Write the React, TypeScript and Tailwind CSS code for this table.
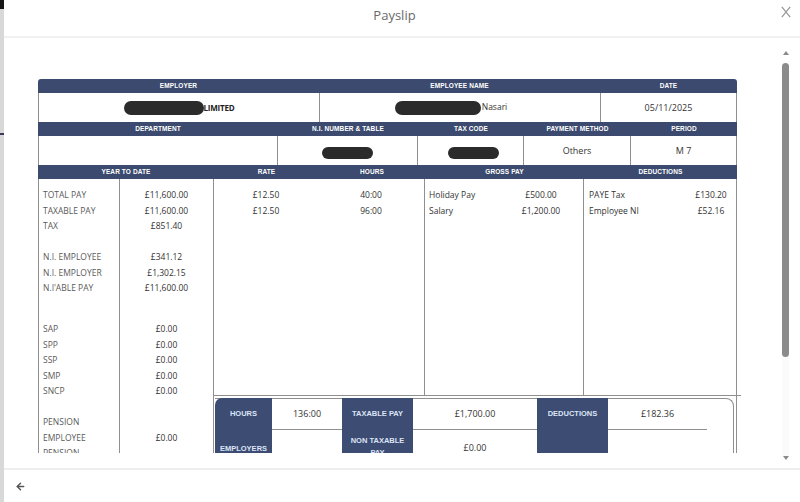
import { ArrowLeft } from "lucide-react";

const H =
  "flex items-center justify-center text-[6.5px] font-bold text-white font-['Liberation_Sans',sans-serif] tracking-[0.1px] whitespace-nowrap";
const B = "border-[#8f8f8f]";

type Row = { label?: string; value?: string; gap?: string };

const ytd: Row[] = [
  { label: "TOTAL PAY", value: "£11,600.00" },
  { label: "TAXABLE PAY", value: "£11,600.00" },
  { label: "TAX", value: "£851.40" },
  { gap: "h-[15.5px]" },
  { label: "N.I. EMPLOYEE", value: "£341.12" },
  { label: "N.I. EMPLOYER", value: "£1,302.15" },
  { label: "N.I'ABLE PAY", value: "£11,600.00" },
  { gap: "h-[25.5px]" },
  { label: "SAP", value: "£0.00" },
  { label: "SPP", value: "£0.00" },
  { label: "SSP", value: "£0.00" },
  { label: "SMP", value: "£0.00" },
  { label: "SNCP", value: "£0.00" },
  { gap: "h-[15.5px]" },
  { label: "PENSION", value: "" },
  { label: "EMPLOYEE", value: "£0.00" },
  { label: "PENSION", value: "" },
  { label: "EMPLOYER", value: "£0.00" },
];

function Pill({ cls }: { cls: string }) {
  return <span className={`inline-block rounded-full bg-[#2b2b2b] ${cls}`} />;
}

function Scrollbar() {
  return (
    <div className="w-[7px] mr-[11px] flex flex-col items-center pt-[13px] pb-[8px]">
      <div className="w-0 h-0 border-x-[3px] border-x-transparent border-b-[4px] border-b-[#8a8a8a]" />
      <div className="mt-[8px] w-[7px] h-[294px] rounded-full bg-[#8b8b8b]" />
      <div className="flex-1 w-[7px] bg-[#fbfbfb]" />
      <div className="w-0 h-0 border-x-[3px] border-x-transparent border-t-[4px] border-t-[#8a8a8a]" />
    </div>
  );
}

function Table() {
  return (
    <div className="w-[699px] text-[#333] text-[8.5px]">
      {/* Row 1 */}
      <div className="h-[14px] flex bg-[#3b4a6e] rounded-t-[3px]">
        <div className={`${H} w-[281px]`}>EMPLOYER</div>
        <div className={`${H} w-[281px]`}>EMPLOYEE NAME</div>
        <div className={`${H} flex-1`}>DATE</div>
      </div>
      <div className={`h-[29px] flex border-x ${B}`}>
        <div className={`w-[281px] border-r ${B} flex items-center justify-center`}>
          <Pill cls="w-[80px] h-[14px]" />
          <span className="text-[8px] font-bold text-[#222] -tracking-[0.2px]">LIMITED</span>
        </div>
        <div className={`w-[281px] border-r ${B} flex items-center justify-center pr-[18px]`}>
          <Pill cls="w-[86px] h-[14px]" />
          <span className="text-[8.5px] text-[#333] ml-[1px]">Nasari</span>
        </div>
        <div className="flex-1 flex items-center justify-center text-[9px]">05/11/2025</div>
      </div>

      {/* Row 2 */}
      <div className="h-[14px] flex bg-[#3b4a6e]">
        <div className={`${H} w-[240px]`}>DEPARTMENT</div>
        <div className={`${H} w-[140px]`}>N.I. NUMBER &amp; TABLE</div>
        <div className={`${H} w-[106px]`}>TAX CODE</div>
        <div className={`${H} w-[107px]`}>PAYMENT METHOD</div>
        <div className={`${H} flex-1`}>PERIOD</div>
      </div>
      <div className={`h-[29px] flex border-x ${B}`}>
        <div className={`w-[239px] border-r ${B}`} />
        <div className={`w-[140px] border-r ${B} flex items-center justify-center pt-[4px]`}>
          <Pill cls="w-[51px] h-[12px]" />
        </div>
        <div className={`w-[106px] border-r ${B} flex items-center justify-center pt-[4px] pl-[5px]`}>
          <Pill cls="w-[51px] h-[12px]" />
        </div>
        <div className={`w-[107px] border-r ${B} flex items-center justify-center text-[9px]`}>Others</div>
        <div className="flex-1 flex items-center justify-center text-[9px]">M 7</div>
      </div>

      {/* Row 3 header */}
      <div className="h-[14px] flex bg-[#3b4a6e]">
        <div className={`${H} w-[176px]`}>YEAR TO DATE</div>
        <div className={`${H} w-[105px]`}>RATE</div>
        <div className={`${H} w-[106px]`}>HOURS</div>
        <div className={`${H} w-[159px]`}>GROSS PAY</div>
        <div className={`${H} flex-1`}>DEDUCTIONS</div>
      </div>

      {/* Body */}
      <div className="flex h-[330px]">
        <div className={`w-[82px] border-x ${B} pt-[8px] pl-[4px] text-[#5a5a5a] leading-[15.5px]`}>
          {ytd.map((r, i) =>
            r.gap ? <div key={i} className={r.gap} /> : <div key={i} className="h-[15.5px] whitespace-nowrap">{r.label}</div>
          )}
        </div>
        <div className={`w-[94px] border-r ${B} pt-[8px] text-center leading-[15.5px]`}>
          {ytd.map((r, i) =>
            r.gap ? <div key={i} className={r.gap} /> : <div key={i} className="h-[15.5px]">{r.value}</div>
          )}
        </div>
        <div className={`w-[523px] border-r ${B} flex flex-col`}>
          <div className="h-[216px] flex">
            <div className="w-[104px] pt-[8px] leading-[15.5px] text-center">
              <div>£12.50</div>
              <div>£12.50</div>
            </div>
            <div className={`w-[107px] border-r ${B} pt-[8px] leading-[15.5px] text-center`}>
              <div>40:00</div>
              <div>96:00</div>
            </div>
            <div className={`w-[159px] border-r ${B} pt-[8px] leading-[15.5px] pl-[4px] pr-[19px]`}>
              <div className="flex"><span className="flex-1">Holiday Pay</span><span className="w-[46px] text-center">£500.00</span></div>
              <div className="flex"><span className="flex-1">Salary</span><span className="w-[46px] text-center">£1,200.00</span></div>
            </div>
            <div className="flex-1 pt-[8px] leading-[15.5px] pl-[5px] pr-[5px]">
              <div className="flex"><span className="flex-1">PAYE Tax</span><span className="w-[40px] text-center">£130.20</span></div>
              <div className="flex"><span className="flex-1">Employee NI</span><span className="w-[40px] text-center">£52.16</span></div>
            </div>
          </div>
          <div className="h-px w-[528px] -ml-px bg-[#8f8f8f]" />
          {/* Summary box */}
          <div className={`mt-[2px] ml-px w-[519px] h-[80px] flex border-t border-r ${B} rounded-tr-[8px]`}>
            <div className="w-[57px] -mt-px bg-[#3d4c72] rounded-tl-[7px] flex flex-col text-[7.5px] font-bold text-[#dce4f6] text-center leading-[12px] font-['Liberation_Sans',sans-serif]">
              <div className="h-[32px] flex items-center justify-center">HOURS</div>
              <div className="pt-[13px]">EMPLOYERS<br />PENSION</div>
            </div>
            <div className="w-[70px] flex flex-col text-[9px]">
              <div className={`h-[31px] border-b ${B} flex items-center justify-center`}>136:00</div>
            </div>
            <div className="w-[71px] -mt-px bg-[#3d4c72] flex flex-col text-[7.5px] font-bold text-[#dce4f6] text-center leading-[12px] font-['Liberation_Sans',sans-serif]">
              <div className="h-[32px] flex items-center justify-center">TAXABLE PAY</div>
              <div className="pt-[5px]">NON TAXABLE<br />PAY</div>
            </div>
            <div className="w-[124px] flex flex-col text-[9px]">
              <div className={`h-[31px] border-b ${B} flex items-center justify-center`}>£1,700.00</div>
              <div className="pt-[12px] text-center leading-[12px]">£0.00</div>
            </div>
            <div className="w-[71px] -mt-px bg-[#3d4c72] flex flex-col text-[7.5px] font-bold text-[#dce4f6] text-center leading-[12px] font-['Liberation_Sans',sans-serif]">
              <div className="h-[32px] flex items-center justify-center">DEDUCTIONS</div>
              <div className="pt-[22px]">NET<br />PAY</div>
            </div>
            <div className="w-[99px] flex flex-col text-[9px]">
              <div className={`h-[31px] border-b ${B} flex items-center justify-center`}>£182.36</div>
            </div>
            <div className="flex-1" />
          </div>
        </div>
      </div>
    </div>
  );
}

export default function App() {
  return (
    <div className="w-[800px] h-[502px] flex overflow-hidden bg-white font-['Open_Sans',sans-serif]">
      <div className="w-[4px] flex flex-col bg-[#d8d8d8]">
        <div className="h-[9px] bg-[#161616]" />
        <div className="h-[124px]" />
        <div className="h-[2px] bg-[#3a3a5a]" />
      </div>
      <div className="flex-1 flex flex-col">
        <div className="h-[36px] flex items-start">
          <div className="flex-1 text-center text-[13px] text-[#6a6a6a] mt-[6px] pl-[4px]">Payslip</div>
          <div className="w-[10px] mt-[6px] mr-[9px]">
            <svg width="10" height="12" viewBox="0 0 10 12">
              <path d="M0.8 0.8 L9.2 11.2 M9.2 0.8 L0.8 11.2" stroke="#9a9a9a" strokeWidth="1.3" fill="none" />
            </svg>
          </div>
        </div>
        <div className="h-[2px] bg-[#f1f1f1]" />
        <div className="flex-1 flex min-h-0">
          <div className="flex-1 overflow-hidden pl-[34px] pt-[41px] mb-[15px]">
            <Table />
          </div>
          <Scrollbar />
        </div>
        <div className="h-[2px] bg-[#eeeeee]" />
        <div className="h-[32px] flex items-center pl-[11px]">
          <ArrowLeft size={11} strokeWidth={3.2} color="#555" />
        </div>
      </div>
    </div>
  );
}
